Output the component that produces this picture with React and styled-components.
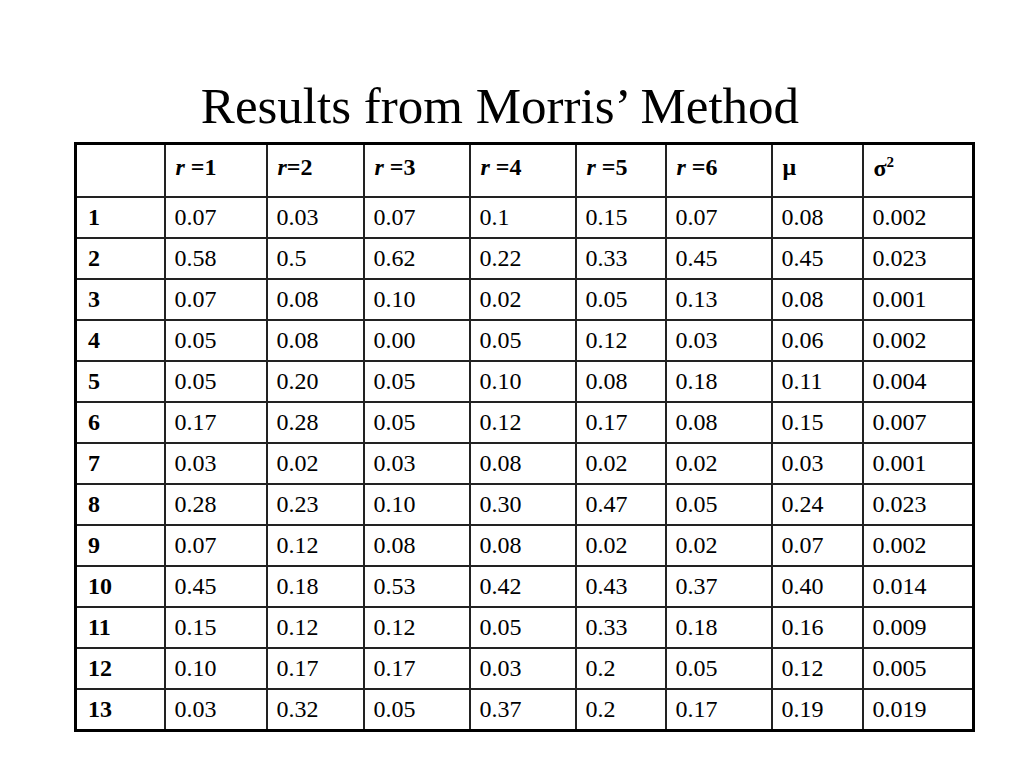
import React from 'react';
import styled, { createGlobalStyle } from 'styled-components';

const GlobalStyle = createGlobalStyle`
  html, body {
    margin: 0;
    padding: 0;
    background: #ffffff;
  }
  body {
    font-family: "Liberation Serif", "Times New Roman", serif;
    color: #000;
  }
`;

const Slide = styled.div`
  width: 1024px;
  height: 768px;
  display: flex;
  flex-direction: column;
  align-items: flex-start;
  padding-top: 76px;
  box-sizing: border-box;
`;

const Title = styled.h1`
  align-self: center;
  margin: 0 24px 6px 0;
  font-weight: normal;
  font-size: 51px;
  line-height: 60px;
  text-align: center;
`;

const Grid = styled.table`
  border-collapse: collapse;
  border: 3px solid #000;
  table-layout: fixed;
  width: 898px;
  margin-left: 74px;
`;

const HeadCell = styled.th`
  height: 45px;
  border: 2px solid #222;
  padding: 0 0 6px 10px;
  text-align: left;
  font-size: 24px;
  font-weight: bold;
  vertical-align: middle;

  sup {
    font-size: 15px;
  }
`;

const RowHead = styled.td`
  height: 39px;
  border: 2px solid #222;
  padding: 0 0 0 11px;
  font-size: 24px;
  font-weight: bold;
`;

const Cell = styled.td`
  height: 39px;
  border: 2px solid #222;
  padding: 0 0 0 9px;
  font-size: 24px;
`;

const Sym = styled.i`
  font-style: italic;
`;

const widths = [89, 102, 97, 106, 106, 90, 106, 91, 111];

const rows = [
  ['0.07', '0.03', '0.07', '0.1', '0.15', '0.07', '0.08', '0.002'],
  ['0.58', '0.5', '0.62', '0.22', '0.33', '0.45', '0.45', '0.023'],
  ['0.07', '0.08', '0.10', '0.02', '0.05', '0.13', '0.08', '0.001'],
  ['0.05', '0.08', '0.00', '0.05', '0.12', '0.03', '0.06', '0.002'],
  ['0.05', '0.20', '0.05', '0.10', '0.08', '0.18', '0.11', '0.004'],
  ['0.17', '0.28', '0.05', '0.12', '0.17', '0.08', '0.15', '0.007'],
  ['0.03', '0.02', '0.03', '0.08', '0.02', '0.02', '0.03', '0.001'],
  ['0.28', '0.23', '0.10', '0.30', '0.47', '0.05', '0.24', '0.023'],
  ['0.07', '0.12', '0.08', '0.08', '0.02', '0.02', '0.07', '0.002'],
  ['0.45', '0.18', '0.53', '0.42', '0.43', '0.37', '0.40', '0.014'],
  ['0.15', '0.12', '0.12', '0.05', '0.33', '0.18', '0.16', '0.009'],
  ['0.10', '0.17', '0.17', '0.03', '0.2', '0.05', '0.12', '0.005'],
  ['0.03', '0.32', '0.05', '0.37', '0.2', '0.17', '0.19', '0.019'],
];

export default function App() {
  return (
    <>
      <GlobalStyle />
      <Slide>
        <Title>Results from Morris’ Method</Title>
        <Grid>
          <colgroup>
            {widths.map((w, i) => (
              <col key={i} style={{ width: w }} />
            ))}
          </colgroup>
          <thead>
            <tr>
              <HeadCell />
              <HeadCell><Sym>r</Sym> =1</HeadCell>
              <HeadCell><Sym>r</Sym>=2</HeadCell>
              <HeadCell><Sym>r</Sym> =3</HeadCell>
              <HeadCell><Sym>r</Sym> =4</HeadCell>
              <HeadCell><Sym>r</Sym> =5</HeadCell>
              <HeadCell><Sym>r</Sym> =6</HeadCell>
              <HeadCell>μ</HeadCell>
              <HeadCell>σ<sup>2</sup></HeadCell>
            </tr>
          </thead>
          <tbody>
            {rows.map((r, i) => (
              <tr key={i}>
                <RowHead>{i + 1}</RowHead>
                {r.map((v, j) => (
                  <Cell key={j}>{v}</Cell>
                ))}
              </tr>
            ))}
          </tbody>
        </Grid>
      </Slide>
    </>
  );
}
